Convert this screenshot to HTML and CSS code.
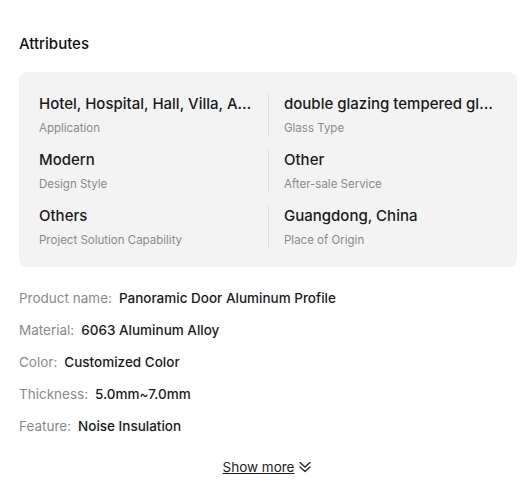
FILE: index.html
```html
<!DOCTYPE html>
<html>
<head>
<meta charset="utf-8">
<link rel="stylesheet" href="styles.css">
</head>
<body>
<div class="wrap">
  <h2 class="title">Attributes</h2>
  <div class="card">
    <div class="item"><div class="val">Hotel, Hospital, Hall, Villa, Apartment, Office Building</div><div class="lab">Application</div></div>
    <div class="item right"><div class="val">double glazing tempered glass</div><div class="lab">Glass Type</div></div>
    <div class="item"><div class="val">Modern</div><div class="lab">Design Style</div></div>
    <div class="item right"><div class="val">Other</div><div class="lab">After-sale Service</div></div>
    <div class="item"><div class="val">Others</div><div class="lab">Project Solution Capability</div></div>
    <div class="item right"><div class="val">Guangdong, China</div><div class="lab">Place of Origin</div></div>
  </div>
  <div class="list">
    <div class="row"><span class="k">Product name:</span><span class="v">Panoramic Door Aluminum Profile</span></div>
    <div class="row"><span class="k">Material:</span><span class="v">6063 Aluminum Alloy</span></div>
    <div class="row"><span class="k">Color:</span><span class="v">Customized Color</span></div>
    <div class="row"><span class="k">Thickness:</span><span class="v">5.0mm~7.0mm</span></div>
    <div class="row"><span class="k">Feature:</span><span class="v">Noise Insulation</span></div>
  </div>
  <div class="more"><span class="more-link">Show more</span><svg class="chev" width="14" height="14" viewBox="0 0 14 14" fill="none" stroke="#222" stroke-width="1.3" stroke-linecap="round" stroke-linejoin="round"><path d="M2 2.5 L7 7 L12 2.5"/><path d="M2 7 L7 11.5 L12 7"/></svg></div>
</div>
</body>
</html>
```
FILE: styles.css
```css
* { box-sizing: border-box; }
body { margin: 0; background: #fff; font-family: Inter, "Noto Sans", sans-serif; color: #222; }
.wrap { padding: 34px 15px 0 19px; }
.title { margin: 0; font-size: 15px; font-weight: 500; line-height: 20px; color: #111; }
.card { margin-top: 18px; background: #f3f3f3; border-radius: 8px; padding: 22px 20px 19px; display: grid; grid-template-columns: 1fr 1fr; row-gap: 14px; }
.item { min-width: 0; padding-right: 16px; }
.item.right { border-left: 1px solid #dedede; padding-left: 15px; padding-right: 0; }
.val { font-size: 15px; line-height: 20px; font-weight: 500; color: #1a1a1a; white-space: nowrap; overflow: hidden; text-overflow: ellipsis; }
.lab { margin-top: 6px; font-size: 11.5px; line-height: 16px; color: #8a8a8a; }
.list { margin-top: 22px; display: flex; flex-direction: column; gap: 14px; }
.row { font-size: 13.5px; line-height: 18px; display: flex; gap: 7px; }
.k { color: #8a8a8a; }
.v { color: #1a1a1a; font-weight: 500; }
.more { margin-top: 23px; display: flex; justify-content: center; align-items: center; gap: 3px; padding-right: 2px; }
.more-link { font-size: 13.5px; line-height: 18px; text-decoration: underline; color: #222; }
.chev { display: block; }
```
